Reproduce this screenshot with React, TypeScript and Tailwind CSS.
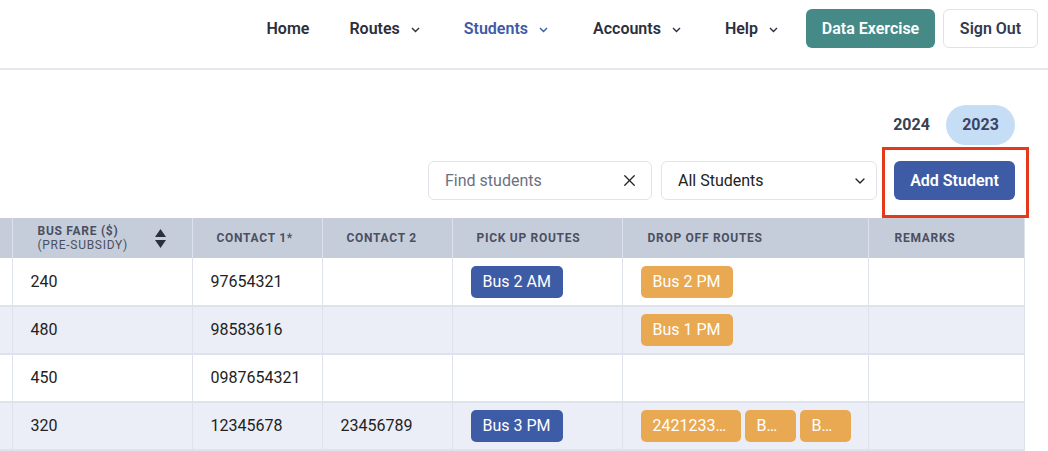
import React from 'react';
import { X, ChevronDown } from 'lucide-react';

const font = { fontFamily: 'Roboto, "Liberation Sans", sans-serif' };

const Chevron: React.FC = () => (
  <svg width="9" height="6" viewBox="0 0 9 6" className="ml-[11px] mt-[2px]">
    <polyline points="1,1 4.5,4.5 8,1" fill="none" stroke="currentColor" strokeWidth="1.4" />
  </svg>
);

const navItems = [
  { label: 'Home', menu: false, gap: 'mr-[40px]' },
  { label: 'Routes', menu: true, gap: 'mr-[44px]' },
  { label: 'Students', menu: true, active: true, gap: 'mr-[45px]' },
  { label: 'Accounts', menu: true, gap: 'mr-[44px]' },
  { label: 'Help', menu: true, gap: 'mr-[28px]' },
];

type Row = {
  fare: string;
  contact1: string;
  contact2: string;
  pickup: { label: string; w?: string }[];
  dropoff: { label: string; w?: string }[];
};

const rows: Row[] = [
  { fare: '240', contact1: '97654321', contact2: '', pickup: [{ label: 'Bus 2 AM' }], dropoff: [{ label: 'Bus 2 PM' }] },
  { fare: '480', contact1: '98583616', contact2: '', pickup: [], dropoff: [{ label: 'Bus 1 PM' }] },
  { fare: '450', contact1: '0987654321', contact2: '', pickup: [], dropoff: [] },
  {
    fare: '320',
    contact1: '12345678',
    contact2: '23456789',
    pickup: [{ label: 'Bus 3 PM' }],
    dropoff: [
      { label: '24212330000', w: 'w-[100px]' },
      { label: 'Bus 4 PM', w: 'w-[51px]' },
      { label: 'Bus 5 PM', w: 'w-[51px]' },
    ],
  },
];

const Badge: React.FC<{ label: string; color: 'blue' | 'orange'; w?: string }> = ({ label, color, w }) => (
  <span
    className={`inline-block h-[32px] leading-[32px] rounded-[5px] px-3 text-[16px] text-white truncate ${w ?? ''} ${
      color === 'blue' ? 'bg-[#3e5ba6]' : 'bg-[#e8a952]'
    }`}
  >
    {label}
  </span>
);

const App: React.FC = () => {
  return (
    <div className="min-h-screen bg-white text-[#222] overflow-hidden" style={font}>
      {/* Header */}
      <header className="h-[70px] border-b-2 border-[#e6e7ef] flex items-start justify-end pt-[9px] pr-[10px]">
        <nav className="flex items-center h-[39px]">
          {navItems.map(item => (
            <div
              key={item.label}
              className={`flex items-center text-[16px] font-semibold ${item.gap} ${item.active ? 'text-[#3e5ba8]' : 'text-[#2b2f3e]'}`}
            >
              {item.label}
              {item.menu && <Chevron />}
            </div>
          ))}
        </nav>
        <button className="h-[39px] w-[129px] rounded-md bg-[#468a87] text-white text-[16px] font-semibold">
          Data Exercise
        </button>
        <button className="ml-[8px] h-[39px] w-[95px] rounded-md border border-[#dfe2ea] bg-white text-[#343a4f] text-[16px] font-semibold">
          Sign Out
        </button>
      </header>

      {/* Year toggle */}
      <div className="flex justify-end pr-[33px] mt-[35px]">
        <button className="h-[40px] w-[69px] rounded-full text-[16px] font-bold text-[#3a3f52]">2024</button>
        <button className="h-[40px] w-[69px] rounded-full bg-[#c5ddf5] text-[16px] font-bold text-[#3a4466]">2023</button>
      </div>

      {/* Toolbar */}
      <div className="flex justify-end items-center pr-[33px] mt-[16px]">
        <div className="h-[39px] w-[224px] border border-[#e2e4ea] rounded-md flex items-center pl-[16px] pr-[12px]">
          <span className="flex-1 text-[16px] text-[#6b7080]">Find students</span>
          <X size={19} strokeWidth={1.6} className="text-[#222]" />
        </div>
        <div className="ml-[9px] h-[39px] w-[216px] border border-[#e2e4ea] rounded-md flex items-center pl-[16px] pr-[8px]">
          <span className="flex-1 text-[16px] text-[#222]">All Students</span>
          <ChevronDown size={16} strokeWidth={2} className="text-[#222]" />
        </div>
        <div className="relative ml-[17px]">
          <button className="h-[39px] w-[121px] rounded-md bg-[#3e5ba6] text-white text-[16px] font-semibold">
            Add Student
          </button>
          <div className="absolute -left-[12px] -top-[14px] -right-[14px] -bottom-[18px] border-[3px] border-[#e5391b] pointer-events-none" />
        </div>
      </div>

      {/* Table */}
      <div className="mt-[18px] w-[1024px]">
        <table className="table-fixed border-collapse w-[1024px]">
          <colgroup>
            <col className="w-[12px]" />
            <col className="w-[180px]" />
            <col className="w-[130px]" />
            <col className="w-[130px]" />
            <col className="w-[170px]" />
            <col className="w-[246px]" />
            <col className="w-[156px]" />
          </colgroup>
          <thead>
            <tr className="h-[40px] bg-[#c6cdda] text-[12px] font-bold tracking-[0.06em] text-[#4a5062] uppercase text-left">
              <th className="border-r border-[#dde2ec]"></th>
              <th className="border-r border-[#dde2ec] pl-[25px] pr-[26px]">
                <div className="flex items-center justify-between">
                  <div className="leading-[14px]">
                    <div>Bus Fare ($)</div>
                    <div className="font-normal">(Pre-subsidy)</div>
                  </div>
                  <svg width="11" height="19" viewBox="0 0 11 19">
                    <polygon points="5.5,0 11,8 0,8" fill="#2b2f3e" />
                    <polygon points="0,11 11,11 5.5,19" fill="#2b2f3e" />
                  </svg>
                </div>
              </th>
              <th className="border-r border-[#dde2ec] pl-[24px]">Contact 1*</th>
              <th className="border-r border-[#dde2ec] pl-[24px]">Contact 2</th>
              <th className="border-r border-[#dde2ec] pl-[24px]">Pick Up Routes</th>
              <th className="border-r border-[#dde2ec] pl-[25px]">Drop Off Routes</th>
              <th className="border-r border-[#dde2ec] pl-[26px]">Remarks</th>
            </tr>
          </thead>
          <tbody className="text-[16px] text-[#222]">
            {rows.map((r, i) => (
              <tr key={i} className={`h-[48px] border-b-2 border-[#dde2ec] ${i % 2 === 1 ? 'bg-[#ebeef7]' : 'bg-white'}`}>
                <td className="border-r border-[#dde2ec]"></td>
                <td className="border-r border-[#dde2ec] pl-[18px]">{r.fare}</td>
                <td className="border-r border-[#dde2ec] pl-[18px]">{r.contact1}</td>
                <td className="border-r border-[#dde2ec] pl-[18px]">{r.contact2}</td>
                <td className="border-r border-[#dde2ec] pl-[18px]">
                  <div className="flex gap-[4px]">
                    {r.pickup.map(b => (
                      <Badge key={b.label} label={b.label} color="blue" w={b.w} />
                    ))}
                  </div>
                </td>
                <td className="border-r border-[#dde2ec] pl-[18px]">
                  <div className="flex gap-[4px]">
                    {r.dropoff.map(b => (
                      <Badge key={b.label} label={b.label} color="orange" w={b.w} />
                    ))}
                  </div>
                </td>
                <td className="border-r border-[#dde2ec]"></td>
              </tr>
            ))}
          </tbody>
        </table>
      </div>
    </div>
  );
};

export default App;
